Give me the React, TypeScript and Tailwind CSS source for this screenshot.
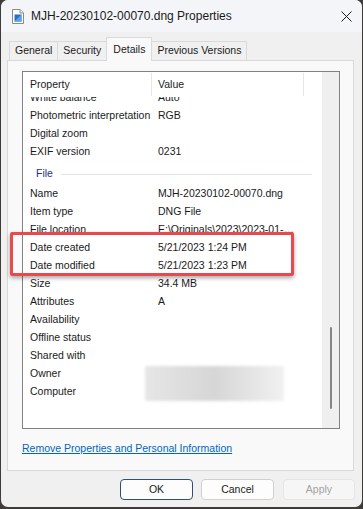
import React from 'react'

type Row = { name: string; value?: string }

const cameraRows: Row[] = [
  { name: 'White balance', value: 'Auto' },
  { name: 'Photometric interpretation', value: 'RGB' },
  { name: 'Digital zoom' },
  { name: 'EXIF version', value: '0231' },
]

const fileRows: Row[] = [
  { name: 'Name', value: 'MJH-20230102-00070.dng' },
  { name: 'Item type', value: 'DNG File' },
  { name: 'File location', value: 'E:\\Originals\\2023\\2023-01-02 Session' },
  { name: 'Date created', value: '5/21/2023 1:24 PM' },
  { name: 'Date modified', value: '5/21/2023 1:23 PM' },
  { name: 'Size', value: '34.4 MB' },
  { name: 'Attributes', value: 'A' },
  { name: 'Availability' },
  { name: 'Offline status' },
  { name: 'Shared with' },
  { name: 'Owner' },
  { name: 'Computer' },
]

function PropRow({ row }: { row: Row }) {
  return (
    <div className="flex h-[18px] items-center whitespace-nowrap">
      <div className="w-[135px] shrink-0 pl-[7px]">{row.name}</div>
      <div className="w-[138px] overflow-hidden text-ellipsis">{row.value}</div>
    </div>
  )
}

function FileIcon() {
  return (
    <svg width="12" height="15" viewBox="0 0 12 15">
      <path d="M0.5 0.5 H8 L11.5 4 V14.5 H0.5 Z" fill="#ffffff" stroke="#8a8a8a" />
      <path d="M8 0.5 V4 H11.5" fill="#eeeeee" stroke="#8a8a8a" />
      <rect x="2.5" y="5.5" width="7" height="7" fill="#2a6fc4" />
      <path d="M2.5 12.5 L9.5 5.5 V12.5 Z" fill="#5aa3e8" />
    </svg>
  )
}

export default function App() {
  const tabs = ['General', 'Security', 'Details', 'Previous Versions']

  return (
    <div
      className="relative h-[509px] w-[363px] overflow-hidden bg-[#3f3b38] pl-px text-[10.5px] text-[#1a1a1a]"
      style={{ fontFamily: '"Liberation Sans", Arial, sans-serif' }}
    >
      {/* window */}
      <div className="flex h-[507px] w-[361px] flex-col overflow-hidden rounded-[7px] bg-[#f0f0f0]">
        {/* title bar */}
        <div className="flex h-[32px] shrink-0 items-center bg-[#f3f5f8] pl-[11px] pr-[10px]">
          <FileIcon />
          <span className="ml-[7px] text-[12px]">MJH-20230102-00070.dng Properties</span>
          <svg className="ml-auto" width="11" height="11" viewBox="0 0 11 11">
            <path d="M0.5 0.5 L10.5 10.5 M10.5 0.5 L0.5 10.5" stroke="#1a1a1a" strokeWidth="1" />
          </svg>
        </div>

        <div className="px-[6px]">
          {/* tabs */}
          <div className="relative z-10 flex h-[28px] items-end pl-[3px] pt-[5px]">
            {tabs.map((t) => {
              const active = t === 'Details'
              return (
                <div
                  key={t}
                  className={
                    active
                      ? '-mb-px -ml-px flex h-[24px] items-start border border-b-0 border-[#d9d9d9] bg-[#f9f9f9] px-[6px] pt-[4px]'
                      : '-ml-px flex h-[19px] items-center border border-b-0 border-[#d9d9d9] bg-[#f0f0f0] px-[5px]'
                  }
                >
                  {t}
                </div>
              )
            })}
          </div>

          {/* tab panel */}
          <div className="flex h-[411px] w-[347px] flex-col border border-[#d9d9d9] bg-[#f9f9f9] pl-[14px] pt-[10px]">
            {/* list box */}
            <div className="flex h-[358px] w-[318px] shrink-0 border border-[#828282] bg-white">
              <div className="flex w-[299px] flex-col">
                <div className="flex h-[25px] shrink-0 items-start pt-px">
                  <div className="flex h-[23px] w-[129px] items-center border-r border-[#e5e5e5] pl-[7px]">Property</div>
                  <div className="flex h-[23px] w-[152px] items-center border-r border-[#e5e5e5] pl-[6px]">Value</div>
                </div>
                <div className="flex-1 overflow-hidden">
                  <div className="relative -mt-[8px]">
                    {cameraRows.map((r) => (
                      <PropRow key={r.name} row={r} />
                    ))}
                    <div className="flex h-[24px] items-center pl-[13px] pr-[10px] pt-[2px]">
                      <span className="text-[#1e3287]">File</span>
                      <div className="ml-[8px] h-px flex-1 bg-[#dfe3ec]" />
                    </div>
                    {fileRows.map((r) => (
                      <PropRow key={r.name} row={r} />
                    ))}
                    {/* blurred owner / computer values */}
                    <div className="absolute left-[122px] top-[277px] h-[35px] w-[139px] bg-linear-to-r from-[#e6e6e6] via-[#d6d6d6] to-[#f1f1f1] blur-[1.5px]" />
                  </div>
                </div>
              </div>
              {/* scrollbar */}
              <div className="flex w-[17px] justify-center bg-[#efefef] pt-[255px]">
                <div className="h-[82px] w-[2px] rounded-full bg-[#858585]" />
              </div>
            </div>

            <div className="mt-[12px] text-[#0067c0] underline">Remove Properties and Personal Information</div>
          </div>

          {/* buttons */}
          <div className="mt-[8px] flex justify-end gap-[8px] pr-px">
            <div className="flex h-[21px] w-[73px] items-center justify-center rounded-[4px] border border-[#2e4f78] bg-[#fdfdfd]">OK</div>
            <div className="mr-px flex h-[21px] w-[73px] items-center justify-center rounded-[4px] border border-[#d0d0d0] bg-[#fdfdfd]">Cancel</div>
            <div className="flex h-[21px] w-[72px] items-center justify-center rounded-[4px] border border-[#e5e5e5] bg-[#f6f6f6] text-[#a3a3a3]">Apply</div>
          </div>
        </div>
      </div>

      {/* annotation highlight */}
      <div className="absolute left-[10px] top-[232px] h-[44px] w-[284px] rounded-[2px] border-[3px] border-[#e9484d] shadow-[0_2px_4px_rgba(0,0,0,0.35)]" />
    </div>
  )
}
